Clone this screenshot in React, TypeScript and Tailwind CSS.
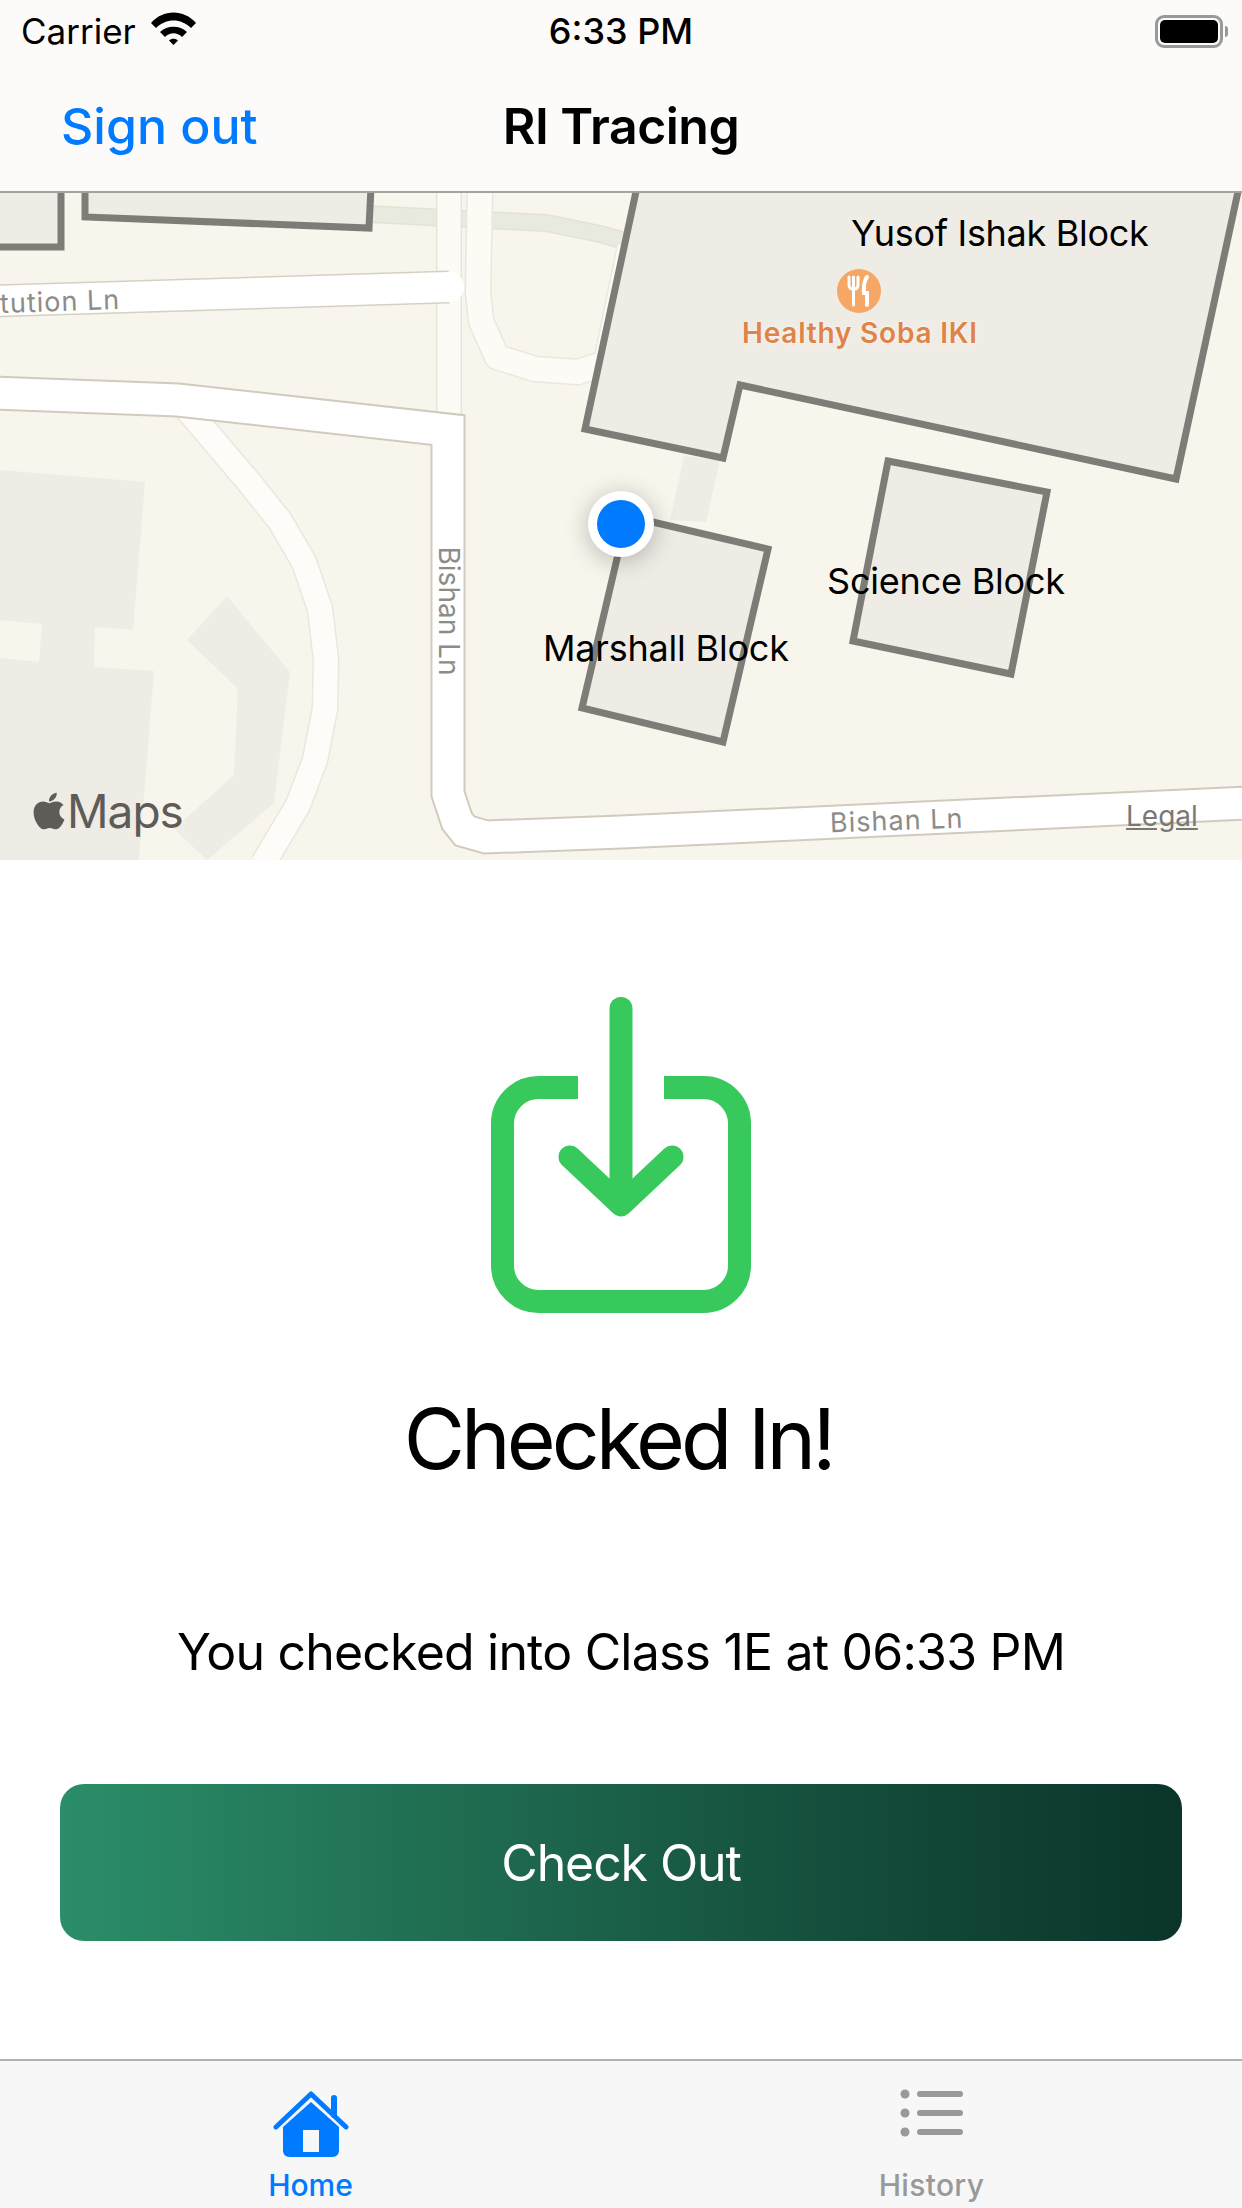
import { FaApple } from "react-icons/fa";

const WifiIcon = () => (
  <svg width="45" height="33" viewBox="0 0 45 33" className="ml-[15px] mt-[-6px]">
    <path fill="#000" d="M0 11C12-3 33-3 45 11L40 16C30 6 15 6 5 16Z" />
    <path fill="#000" d="M9 20C16 13 29 13 36 20L31 25C26 20 19 20 14 25Z" />
    <path fill="#000" d="M18 28.5C20.5 26 24.5 26 27 28.5L22.5 33Z" />
  </svg>
);

const MapDrawing = () => (
  <svg viewBox="0 1 1242 667" className="absolute inset-0 w-full h-full">
    <rect width="1242" height="668" fill="#f8f5ed" />
    {/* lower left blocks */}
    <path fill="#efece5" d="M0 278L145 290L133 438L95 435L94 475L154 479L139 668H0V466L39 470L42 432L0 428Z" />
    <path fill="#efece5" d="M227 404L290 480L274 611L207 668L174 637L234 583L238 497L187 448Z" />
    {/* green path */}
    <path d="M369 22L546 31L600 42L640 53" fill="none" stroke="#e2e3d5" strokeWidth="18" />
    <path d="M369 22L546 31L600 42L640 53" fill="none" stroke="#e9eadf" strokeWidth="15" />
    {/* minor roads */}
    <g fill="none" strokeLinejoin="round">
      <path d="M449 -5V236" stroke="#e8e4dc" strokeWidth="26" />
      <path d="M449 -5V236" stroke="#fdfbf6" strokeWidth="23" />
      <path d="M480 -5L478 100L481 129L497 165L535 177L578 180L606 171L630 55" stroke="#ebe7df" strokeWidth="27" />
      <path d="M480 -5L478 100L481 129L497 165L535 177L578 180L606 171L630 55" stroke="#fdfbf6" strokeWidth="24" />
      <path d="M186 216L248 289L280 329L304 370L320 417L326 468L325 517L315 568L298 613L263 672" stroke="#ebe7df" strokeWidth="27" />
      <path d="M186 216L248 289L280 329L304 370L320 417L326 468L325 517L315 568L298 613L263 672" stroke="#fefcf8" strokeWidth="24" />
    </g>
    {/* main roads */}
    <g fill="none" strokeLinejoin="miter">
      <path d="M-5 109L449 95" stroke="#d8cfc4" strokeWidth="33" />
      <path d="M-5 201L178 208L448 238V602L457 629L465 639L486 645L621 640L1247 611" stroke="#d3cabe" strokeWidth="35" />
      <path d="M-5 109L449 95" stroke="#fff" strokeWidth="30" strokeLinecap="round" />
      <path d="M-5 201L178 208L448 238V602L457 629L465 639L486 645L621 640L1247 611" stroke="#fff" strokeWidth="31" />
    </g>
    {/* buildings */}
    <path fill="#efece5" d="M684 264L720 268L706 330L670 328Z" />
    <g fill="#efece5" stroke="#7e7c76" strokeWidth="7" strokeLinejoin="miter">
      <path d="M-5 55H61V-5H-5Z" />
      <path d="M85 -5V25L369 36L371 -5Z" />
      <path d="M637 -5L585 237L723 266L740 193L1176 287L1239 -5Z" />
      <path d="M888 269L1047 300L1011 482L853 449Z" />
      <path d="M627 324L768 357L723 550L582 516Z" />
    </g>
  </svg>
);

const MapView = () => (
  <div className="relative h-[667px] overflow-hidden">
    <MapDrawing />
    <span className="absolute left-0 top-[95px] text-[27px] leading-none tracking-[1px] text-[#8c8c89] -rotate-2 whitespace-nowrap">tution Ln</span>
    <span className="absolute left-[381px] top-[404px] w-[136px] text-center text-[28px] leading-none text-[#8c8c89] rotate-90 whitespace-nowrap">Bishan Ln</span>
    <span className="absolute left-[830px] top-[614px] text-[27px] leading-none tracking-[1px] text-[#8c8c89] -rotate-2 whitespace-nowrap">Bishan Ln</span>
    <span className="absolute left-[1126px] top-[609px] text-[28px] leading-none text-[#7a7875] underline whitespace-nowrap">Legal</span>
    <span className="absolute left-[851px] top-[22px] text-[36px] leading-none tracking-[-0.3px] text-black whitespace-nowrap">Yusof Ishak Block</span>
    <span className="absolute left-[827px] top-[370px] text-[36px] leading-none tracking-[-0.2px] text-black whitespace-nowrap">Science Block</span>
    <span className="absolute left-[543px] top-[437px] text-[36px] leading-none tracking-[-0.2px] text-black whitespace-nowrap">Marshall Block</span>
    <span className="absolute left-[742px] top-[126px] text-[28px] leading-none font-semibold tracking-[0.8px] text-[#e08347] whitespace-nowrap [text-shadow:0_0_3px_#fff]">Healthy Soba IKI</span>
    <div className="absolute left-[837px] top-[76px] w-[44px] h-[44px] rounded-full bg-[#f6a765] flex items-center justify-center">
      <svg width="26" height="32" viewBox="0 0 26 32" fill="none" stroke="#fff" strokeLinecap="round">
        <path d="M3 2V10C3 13 5 14 7.500 14C10 14 12 13 12 10V2M7.500 2V30" strokeWidth="3" />
        <path d="M21 2C18 6 17.500 12 18 18H21V30" strokeWidth="4" />
      </svg>
    </div>
    <div className="absolute left-[588px] top-[298px] w-[66px] h-[66px] rounded-full bg-white shadow-[0_4px_24px_rgba(0,0,0,0.25)] flex items-center justify-center">
      <div className="w-[48px] h-[48px] rounded-full bg-[#007aff]" />
    </div>
    <div className="absolute left-[28px] top-[595px] flex items-center text-[#5e5c58]">
      <FaApple size={42} />
      <span className="text-[46px] leading-none tracking-[-1px] ml-[-3px]">Maps</span>
    </div>
  </div>
);

const HomeIcon = () => (
  <svg width="76" height="68" viewBox="0 0 76 68">
    <path d="M3 37L38 4L73 37" fill="none" stroke="#007aff" strokeWidth="5" strokeLinecap="round" strokeLinejoin="round" />
    <path d="M61 8V25" stroke="#007aff" strokeWidth="6" strokeLinecap="round" />
    <path fillRule="evenodd" fill="#007aff" d="M38 12L66 37V60C66 64 64 67 59 67H17C12 67 10 64 10 60V37ZM30 40V62H46V40Z" />
  </svg>
);

const HistoryIcon = () => (
  <svg width="65" height="50" viewBox="0 0 65 50" fill="#999">
    <circle cx="6" cy="6" r="4.500" />
    <circle cx="6" cy="25" r="4.500" />
    <circle cx="6" cy="44" r="4.500" />
    <rect x="18" y="3" width="46" height="6" rx="3" />
    <rect x="18" y="22" width="46" height="6" rx="3" />
    <rect x="18" y="41" width="46" height="6" rx="3" />
  </svg>
);

export default function App() {
  return (
    <div className="w-[1242px] h-[2208px] flex flex-col bg-white font-[Inter,sans-serif] text-black overflow-hidden">
      <header className="h-[193px] shrink-0 bg-[#fcfbf9] border-b-[2px] border-[#a5a39f] flex flex-col">
        <div className="h-[62px] flex items-center pl-[21px] pr-[14px] relative">
          <span className="text-[35px] leading-none">Carrier</span>
          <WifiIcon />
          <span className="absolute left-0 right-0 text-center text-[36px] leading-none font-medium">6:33 PM</span>
          <div className="ml-auto flex items-center">
            <div className="w-[68px] h-[33px] rounded-[9px] border-[3px] border-[#999] p-[2px]">
              <div className="w-full h-full rounded-[5px] bg-black" />
            </div>
            <div className="w-[3px] h-[11px] ml-[2px] rounded-r-full bg-[#999]" />
          </div>
        </div>
        <div className="relative flex-1 flex items-center pl-[61px] pb-[2px]">
          <span className="text-[50px] leading-none font-medium text-[#007aff]">Sign out</span>
          <span className="absolute left-0 right-0 text-center text-[50px] leading-none font-semibold tracking-[-0.5px]">RI Tracing</span>
        </div>
      </header>
      <MapView />
      <main className="flex-1 flex flex-col items-center">
        <svg width="260" height="316" viewBox="0 0 260 316" fill="none" stroke="#37c95c" strokeWidth="23" className="mt-[137px]">
          <path d="M87 90.500H47.500A36 36 0 0 0 11.500 126.500V268.500A36 36 0 0 0 47.500 304.500H212.500A36 36 0 0 0 248.500 268.500V126.500A36 36 0 0 0 212.500 90.500H173" />
          <path d="M130 11.500V205" strokeLinecap="round" />
          <path d="M79 160L130 208L181 160" strokeLinecap="round" strokeLinejoin="round" />
        </svg>
        <h1 className="mt-[76px] mr-[6px] text-[84px] leading-[100px] font-normal tracking-[-4px]">Checked In!</h1>
        <p className="mt-[133px] text-[50px] leading-[60px] tracking-[-0.8px]">You checked into Class 1E at 06:33 PM</p>
        <button className="mt-[102px] w-[1122px] h-[157px] pt-[2px] rounded-[24px] bg-linear-to-r from-[#2b8e68] to-[#0b342a] text-white text-[50px] tracking-[-1.1px]">Check Out</button>
      </main>
      <nav className="h-[149px] shrink-0 bg-[#f7f7f7] border-t-[2px] border-[#b0b0b0] grid grid-cols-2">
        <div className="flex flex-col items-center pt-[29px]">
          <HomeIcon />
          <span className="mt-[12px] text-[30px] leading-none font-medium text-[#007aff]">Home</span>
        </div>
        <div className="flex flex-col items-center pt-[27px]">
          <HistoryIcon />
          <span className="mt-[32px] text-[30px] leading-none font-medium tracking-[0.3px] text-[#999]">History</span>
        </div>
      </nav>
    </div>
  );
}
